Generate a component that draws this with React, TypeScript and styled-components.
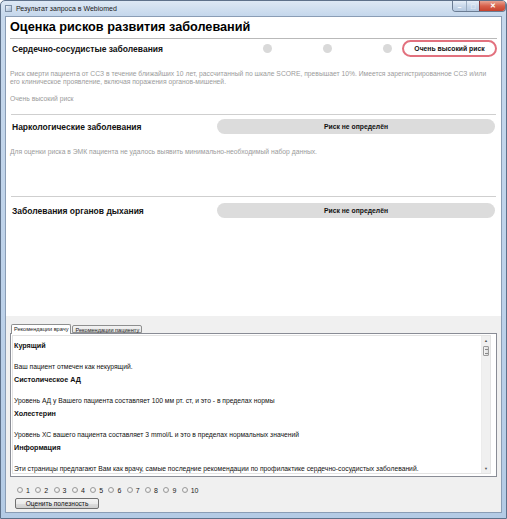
import React from 'react';
import styled, { createGlobalStyle } from 'styled-components';

const GlobalStyle = createGlobalStyle`
  html, body {
    margin: 0;
    padding: 0;
    background: #ffffff;
  }
  * {
    box-sizing: border-box;
  }
`;

const font = `"Liberation Sans", Arial, sans-serif`;

const Frame = styled.div`
  width: 507px;
  height: 519px;
  display: flex;
  flex-direction: column;
  padding: 0 4px 5px 4px;
  border: 1px solid #5e718a;
  border-radius: 5px 5px 0 0;
  background: linear-gradient(to bottom, #dde8f4 0px, #c6d8ec 14px, #bcd1e9 60%, #b4cbe5 100%);
  font-family: ${font};
  overflow: hidden;
`;

const TitleBar = styled.div`
  height: 15px;
  display: flex;
  align-items: flex-start;
`;

const TitleIcon = styled.div`
  width: 7px;
  height: 7px;
  margin: 4px 4px 0 0;
  border: 1px solid #7d8fa5;
  background: linear-gradient(135deg, #f4f7fb, #9fb7d3);
`;

const TitleText = styled.div`
  font-size: 7px;
  line-height: 15px;
  color: #1b1b1b;
  flex: 1;
`;

const Controls = styled.div`
  display: flex;
  margin-right: -4px;
  height: 11px;
  border: 1px solid #6a7c93;
  border-top: none;
  border-radius: 0 0 4px 4px;
  overflow: hidden;
`;

const CtrlButton = styled.div<{ $close?: boolean }>`
  width: ${(p) => (p.$close ? '26px' : '13px')};
  height: 100%;
  display: flex;
  align-items: center;
  justify-content: center;
  color: #ffffff;
  font-size: 7px;
  font-weight: bold;
  border-left: ${(p) => (p.$close ? '1px solid #8b3b3b' : '1px solid #9aabc0')};
  background: ${(p) =>
    p.$close
      ? 'linear-gradient(to bottom, #e8a493 0%, #d7604b 50%, #c7422d 100%)'
      : 'linear-gradient(to bottom, #e6eef8 0%, #c9d8ea 50%, #b6c9e0 100%)'};
  &:first-child {
    border-left: none;
  }
`;

const Client = styled.div`
  flex: 1;
  display: flex;
  flex-direction: column;
  border: 1px solid #8a9db5;
  background: #f0f0f0;
`;

const TopPane = styled.div`
  height: 299px;
  background: #ffffff;
  padding: 0 4px;
`;

const PageTitle = styled.div`
  height: 22px;
  line-height: 21px;
  font-size: 12.7px;
  font-weight: bold;
  color: #000000;
  border-bottom: 1px solid #b9b9b9;
`;

const Divider = styled.div`
  height: 1px;
  margin: 0 1px;
  background: #cfcfcf;
`;

const Section = styled.div<{ $top: number; $bottom: number }>`
  padding-top: ${(p) => p.$top}px;
  padding-bottom: ${(p) => p.$bottom}px;
`;

const RiskRow = styled.div`
  height: 19px;
  display: flex;
  align-items: center;
`;

const RiskLabel = styled.div`
  flex: 0 0 207px;
  padding-left: 2px;
  font-size: 8.5px;
  font-weight: bold;
  color: #111111;
`;

const RiskScale = styled.div<{ $right: number }>`
  flex: 1;
  display: flex;
  align-items: center;
  margin-right: ${(p) => p.$right}px;
`;

const Dots = styled.div`
  display: flex;
  gap: 51px;
  margin-left: 46px;
`;

const Dot = styled.div`
  width: 9px;
  height: 9px;
  border-radius: 50%;
  background: #d9d9d9;
`;

const Pill = styled.div<{ $active?: boolean }>`
  display: flex;
  align-items: center;
  justify-content: center;
  font-size: 6.8px;
  font-weight: bold;
  color: #111111;
  border-radius: 9px;
  ${(p) =>
    p.$active
      ? `
    margin-left: auto;
    width: 95px;
    height: 17px;
    background: #ffffff;
    border: 2px solid #e2717e;
  `
      : `
    flex: 1;
    height: 15px;
    background: #dcdcdc;
  `}
`;

const Note = styled.div<{ $top: number }>`
  margin-top: ${(p) => p.$top}px;
  font-size: 6.75px;
  line-height: 8px;
  color: #9b9b9b;
`;

const LowerPane = styled.div`
  flex: 1;
  display: flex;
  flex-direction: column;
  padding: 8px 4px 0 4px;
`;

const TabStrip = styled.div`
  display: flex;
  align-items: flex-end;
  height: 9px;
  padding-left: 1px;
  position: relative;
  z-index: 1;
`;

const Tab = styled.div<{ $selected?: boolean }>`
  height: ${(p) => (p.$selected ? '10px' : '8px')};
  margin-bottom: ${(p) => (p.$selected ? '-1px' : '0')};
  padding: 0 2px;
  font-size: 5.6px;
  line-height: 8px;
  color: #222222;
  border: 1px solid #8e8f8f;
  border-bottom: ${(p) => (p.$selected ? 'none' : '1px solid #8e8f8f')};
  border-radius: 2px 2px 0 0;
  background: ${(p) => (p.$selected ? '#ffffff' : 'linear-gradient(to bottom, #f3f3f3, #e3e3e3)')};
  & + & {
    margin-left: 1px;
  }
`;

const TabPanel = styled.div`
  height: 144px;
  border: 1px solid #898c95;
  background: #ffffff;
  display: flex;
  padding: 1px 5px 2px 1px;
`;

const Scroller = styled.div`
  flex: 1;
  display: flex;
  border: 1px solid #e3e3e3;
  overflow: hidden;
`;

const Doc = styled.div`
  flex: 1;
  padding: 6px 0 0 1px;
  color: #111111;
`;

const DocHeading = styled.div`
  font-size: 7.2px;
  font-weight: bold;
  line-height: 8px;
  height: 8px;
`;

const DocText = styled.div`
  font-size: 6.75px;
  line-height: 8px;
  height: 8px;
  margin: 12.5px 0 5.5px 0;
`;

const ScrollBar = styled.div`
  width: 9px;
  display: flex;
  flex-direction: column;
  background: #f0f0f0;
  border-left: 1px solid #ececec;
`;

const ArrowBtn = styled.div`
  height: 9px;
  display: flex;
  align-items: center;
  justify-content: center;
  font-size: 4px;
  color: #555555;
`;

const Thumb = styled.div`
  height: 10px;
  margin: 1px 1px 0 1px;
  border: 1px solid #9a9a9a;
  border-radius: 1px;
  background: linear-gradient(to right, #f4f4f4, #dcdcdc);
  display: flex;
  align-items: center;
  justify-content: center;
  &::after {
    content: '';
    width: 3px;
    height: 3px;
    border-top: 1px solid #888;
    border-bottom: 1px solid #888;
  }
`;

const Track = styled.div`
  flex: 1;
`;

const RatingRow = styled.div`
  display: flex;
  align-items: center;
  gap: 5.4px;
  height: 10px;
  margin: 8px 0 0 7px;
`;

const RadioItem = styled.label`
  display: flex;
  align-items: center;
  gap: 3px;
  font-size: 7px;
  color: #222222;
`;

const Radio = styled.span`
  width: 6px;
  height: 6px;
  border-radius: 50%;
  border: 1px solid #9c9c9c;
  background: radial-gradient(circle at 40% 40%, #ffffff, #d6d6d6);
`;

const RateButton = styled.button`
  width: 84px;
  height: 11px;
  margin: 3px 0 0 5px;
  padding: 0;
  font-family: ${font};
  font-size: 6.6px;
  color: #111111;
  border: 1px solid #707070;
  border-radius: 2px;
  background: linear-gradient(to bottom, #f3f3f3 0%, #ebebeb 50%, #dddddd 51%, #cfcfcf 100%);
`;

const recommendations = [
  { title: 'Курящий', text: 'Ваш пациент отмечен как некурящий.' },
  {
    title: 'Систолическое АД',
    text: 'Уровень АД у Вашего пациента составляет 100 мм рт. ст, и это - в пределах нормы',
  },
  {
    title: 'Холестерин',
    text: 'Уровень ХС вашего пациента составляет 3 mmol/L и это в пределах нормальных значений',
  },
  {
    title: 'Информация',
    text: 'Эти страницы предлагают Вам как врачу, самые последние рекомендации по профилактике сердечно-сосудистых заболеваний.',
  },
];

export default function App() {
  return (
    <>
      <GlobalStyle />
      <Frame>
        <TitleBar>
          <TitleIcon />
          <TitleText>Результат запроса в Webiomed</TitleText>
          <Controls>
            <CtrlButton>–</CtrlButton>
            <CtrlButton>□</CtrlButton>
            <CtrlButton $close>✕</CtrlButton>
          </Controls>
        </TitleBar>
        <Client>
          <TopPane>
            <PageTitle>Оценка рисков развития заболеваний</PageTitle>

            <Section $top={0} $bottom={11}>
              <RiskRow>
                <RiskLabel>Сердечно-сосудистые заболевания</RiskLabel>
                <RiskScale $right={0}>
                  <Dots>
                    <Dot />
                    <Dot />
                    <Dot />
                  </Dots>
                  <Pill $active>Очень высокий риск</Pill>
                </RiskScale>
              </RiskRow>
              <Note $top={12}>
                Риск смерти пациента от ССЗ в течение ближайших 10 лет, рассчитанный по шкале SCORE, превышает 10%.
                Имеется зарегистрированное ССЗ и/или его клиническое проявление, включая поражения органов-мишеней.
              </Note>
              <Note $top={9}>Очень высокий риск</Note>
            </Section>
            <Divider />

            <Section $top={2} $bottom={40}>
              <RiskRow>
                <RiskLabel>Наркологические заболевания</RiskLabel>
                <RiskScale $right={2}>
                  <Pill>Риск не определён</Pill>
                </RiskScale>
              </RiskRow>
              <Note $top={12}>
                Для оценки риска в ЭМК пациента не удалось выявить минимально-необходимый набор данных.
              </Note>
            </Section>
            <Divider />

            <Section $top={4} $bottom={0}>
              <RiskRow>
                <RiskLabel>Заболевания органов дыхания</RiskLabel>
                <RiskScale $right={2}>
                  <Pill>Риск не определён</Pill>
                </RiskScale>
              </RiskRow>
            </Section>
          </TopPane>

          <LowerPane>
            <TabStrip>
              <Tab $selected>Рекомендации врачу</Tab>
              <Tab>Рекомендации пациенту</Tab>
            </TabStrip>
            <TabPanel>
              <Scroller>
                <Doc>
                  {recommendations.map((r) => (
                    <React.Fragment key={r.title}>
                      <DocHeading>{r.title}</DocHeading>
                      <DocText>{r.text}</DocText>
                    </React.Fragment>
                  ))}
                </Doc>
                <ScrollBar>
                  <ArrowBtn>▲</ArrowBtn>
                  <Thumb />
                  <Track />
                  <ArrowBtn>▼</ArrowBtn>
                </ScrollBar>
              </Scroller>
            </TabPanel>
            <RatingRow>
              {Array.from({ length: 10 }, (_, i) => (
                <RadioItem key={i}>
                  <Radio />
                  {i + 1}
                </RadioItem>
              ))}
            </RatingRow>
            <RateButton>Оценить полезность</RateButton>
          </LowerPane>
        </Client>
      </Frame>
    </>
  );
}
